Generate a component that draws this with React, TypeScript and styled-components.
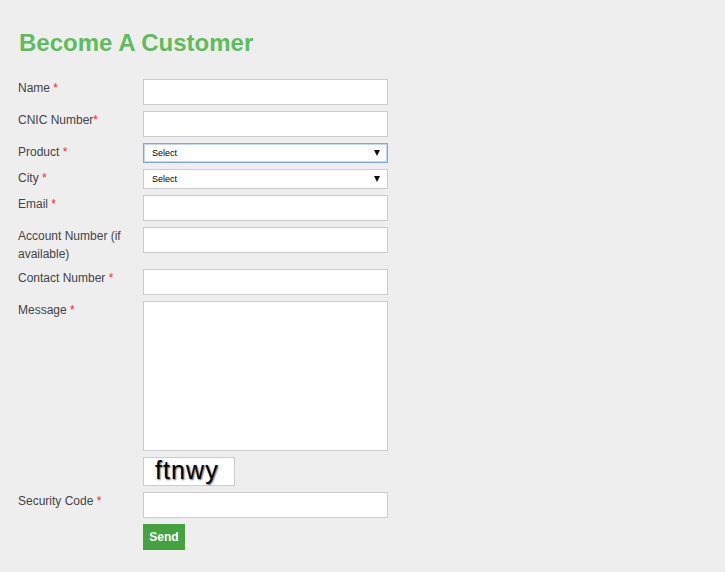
import React from "react";
import styled, { createGlobalStyle } from "styled-components";

const Global = createGlobalStyle`
  html, body { margin: 0; padding: 0; background: #eeeeee; }
  body { font-family: "Liberation Sans", Arial, sans-serif; }
  * { box-sizing: border-box; }
`;

const Page = styled.div`
  padding: 29px 18px 20px 18px;
`;

const Title = styled.h1`
  margin: 0 0 22px 1px;
  font-size: 24px;
  line-height: 28px;
  font-weight: bold;
  color: #5dbd5c;
`;

const Form = styled.form`
  display: grid;
  grid-template-columns: 125px 245px;
  row-gap: 6px;
  align-items: start;
`;

const Label = styled.label`
  font-size: 12px;
  line-height: 18px;
  color: #444444;
`;

const Req = styled.span`
  color: #ee2a36;
`;

const TextInput = styled.input`
  display: block;
  width: 245px;
  height: 26px;
  margin: 0;
  padding: 0 6px;
  border: 1px solid #cccccc;
  background: #ffffff;
  font-family: "Liberation Sans", Arial, sans-serif;
  font-size: 12px;
  outline: none;
`;

const TextArea = styled.textarea`
  display: block;
  width: 245px;
  height: 150px;
  margin: 0;
  padding: 4px 6px;
  border: 1px solid #cccccc;
  background: #ffffff;
  font-family: "Liberation Sans", Arial, sans-serif;
  font-size: 12px;
  resize: none;
  outline: none;
`;

const SelectBox = styled.div<{ $focused?: boolean }>`
  display: flex;
  align-items: center;
  width: 245px;
  height: 20px;
  padding-right: 7px;
  background: #ffffff;
  border: 1px solid ${(p) => (p.$focused ? "#7ea5ec" : "#cccccc")};
  box-shadow: ${(p) => (p.$focused ? "inset 0 0 0 1px #c4d6f6" : "none")};
`;

const NativeSelect = styled.select`
  flex: 1;
  height: 100%;
  margin: 0;
  padding: 0 0 0 8px;
  border: none;
  background: transparent;
  appearance: none;
  -webkit-appearance: none;
  font-family: "Liberation Sans", Arial, sans-serif;
  font-size: 9px;
  color: #000000;
  outline: none;
`;

const Caret = styled.span`
  width: 0;
  height: 0;
  border-left: 3.5px solid transparent;
  border-right: 3.5px solid transparent;
  border-top: 6px solid #111111;
`;

const Spacer = styled.div``;

const Captcha = styled.div`
  width: 92px;
  height: 29px;
  padding: 1px 0 0 11px;
  background: #ffffff;
  border: 1px solid #cccccc;
  font-family: "Liberation Sans", Arial, sans-serif;
  font-size: 25px;
  line-height: 23px;
  letter-spacing: 1.1px;
  color: #000000;
  text-shadow: 1px 1px 1.5px #666666;
  user-select: none;
`;

const SendButton = styled.button`
  width: 42px;
  height: 26px;
  margin: 0;
  padding: 0;
  border: none;
  background: #43a33f;
  color: #ffffff;
  font-family: "Liberation Sans", Arial, sans-serif;
  font-size: 12px;
  font-weight: bold;
  cursor: pointer;
`;

export default function App() {
  return (
    <>
      <Global />
      <Page>
        <Title>Become A Customer</Title>
        <Form onSubmit={(e) => e.preventDefault()}>
          <Label>
            Name <Req>*</Req>
          </Label>
          <TextInput type="text" />

          <Label>
            CNIC Number<Req>*</Req>
          </Label>
          <TextInput type="text" />

          <Label>
            Product <Req>*</Req>
          </Label>
          <SelectBox $focused>
            <NativeSelect defaultValue="">
              <option value="">Select</option>
            </NativeSelect>
            <Caret />
          </SelectBox>

          <Label>
            City <Req>*</Req>
          </Label>
          <SelectBox>
            <NativeSelect defaultValue="">
              <option value="">Select</option>
            </NativeSelect>
            <Caret />
          </SelectBox>

          <Label>
            Email <Req>*</Req>
          </Label>
          <TextInput type="text" />

          <Label>Account Number (if available)</Label>
          <TextInput type="text" />

          <Label>
            Contact Number <Req>*</Req>
          </Label>
          <TextInput type="text" />

          <Label>
            Message <Req>*</Req>
          </Label>
          <TextArea />

          <Spacer />
          <Captcha>ftnwy</Captcha>

          <Label>
            Security Code <Req>*</Req>
          </Label>
          <TextInput type="text" />

          <Spacer />
          <SendButton type="submit">Send</SendButton>
        </Form>
      </Page>
    </>
  );
}
